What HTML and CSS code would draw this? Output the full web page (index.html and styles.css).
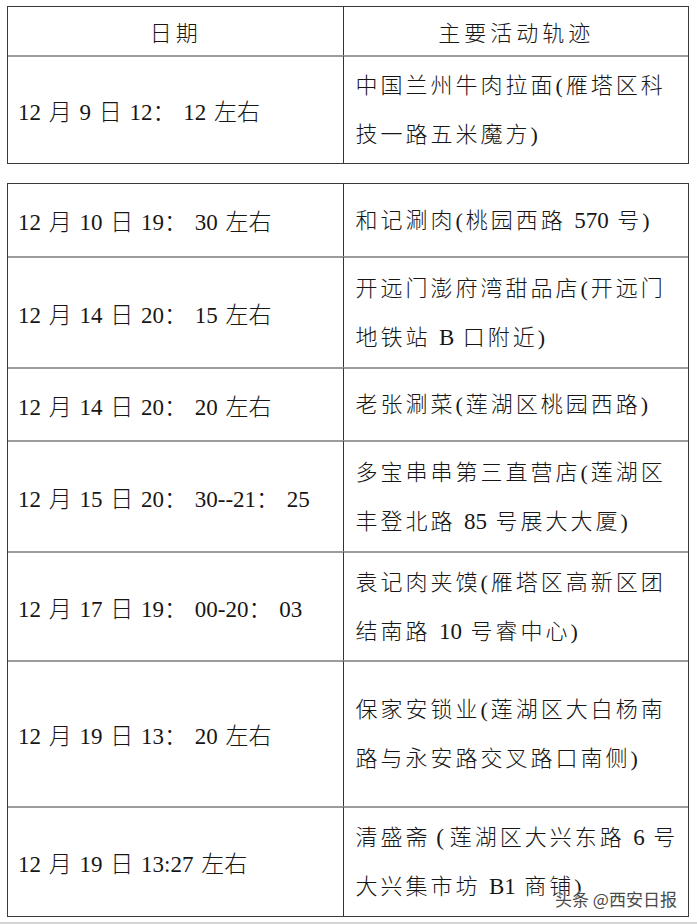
FILE: index.html
```html
<!DOCTYPE html>
<html lang="zh-CN">
<head>
<meta charset="utf-8">
<title>主要活动轨迹</title>
<link rel="stylesheet" href="styles.css">
</head>
<body>
<div class="page">
  <table class="t t1">
    <colgroup><col class="k1"><col class="k2"></colgroup>
    <tr class="r-hd">
      <th class="c1">日期</th>
      <th class="c2">主要活动轨迹</th>
    </tr>
    <tr class="r-108">
      <td class="c1">12 月 9 日 12： 12 左右</td>
      <td class="c2">中国兰州牛肉拉面(雁塔区科<br>技一路五米魔方)</td>
    </tr>
  </table>

  <table class="t t2">
    <colgroup><col class="k1"><col class="k2"></colgroup>
    <tr class="r-first">
      <td class="c1">12 月 10 日 19： 30 左右</td>
      <td class="c2">和记涮肉(桃园西路 <span class="n">570</span> 号)</td>
    </tr>
    <tr class="r-111">
      <td class="c1">12 月 14 日 20： 15 左右</td>
      <td class="c2">开远门澎府湾甜品店(开远门<br>地铁站 <span class="n">B</span> 口附近)</td>
    </tr>
    <tr class="r-73">
      <td class="c1">12 月 14 日 20： 20 左右</td>
      <td class="c2">老张涮菜(莲湖区桃园西路)</td>
    </tr>
    <tr class="r-111">
      <td class="c1">12 月 15 日 20： 30--21： 25</td>
      <td class="c2">多宝串串第三直营店(莲湖区<br>丰登北路 <span class="n">85</span> 号展大大厦)</td>
    </tr>
    <tr class="r-109">
      <td class="c1">12 月 17 日 19： 00-20： 03</td>
      <td class="c2">袁记肉夹馍(雁塔区高新区团<br>结南路 <span class="n">10</span> 号睿中心)</td>
    </tr>
    <tr class="r-146">
      <td class="c1">12 月 19 日 13： 20 左右</td>
      <td class="c2">保家安锁业(莲湖区大白杨南<br>路与永安路交叉路口南侧)</td>
    </tr>
    <tr class="r-110">
      <td class="c1">12 月 19 日 13:27 左右</td>
      <td class="c2">清盛斋<span class="n"> ( </span>莲湖区大兴东路 <span class="n">6</span> 号<br>大兴集市坊 <span class="n">B1</span> 商铺)</td>
    </tr>
  </table>

  <div class="wm">头条 @西安日报</div>
  <div class="edge"></div>
</div>
</body>
</html>
```

FILE: styles.css
```css
html, body {
  margin: 0;
  padding: 0;
  background: #ffffff;
}

.page {
  position: relative;
  width: 697px;
  height: 924px;
  padding: 6px 0 0 7px;
  box-sizing: border-box;
  font-family: "Liberation Serif", "Noto Sans CJK SC", serif;
  color: #161616;
}

.t {
  width: 682px;
  border-collapse: separate;
  border-spacing: 0;
  border: 1.5px solid #3a3a3a;
  table-layout: fixed;
}

.t .k1 { width: 336px; }
.t .k2 { width: 343px; }

.t2 {
  margin-top: 19px;
}

.t th,
.t td {
  padding: 0;
  vertical-align: middle;
  white-space: nowrap;
  font-weight: 300;
  box-sizing: border-box;
}

.t tr + tr th,
.t tr + tr td {
  border-top: 2px solid #9c9c9c;
}

.t .c1 {
  border-right: 1px solid #333333;
}

.t td.c1 {
  font-size: 23px;
  word-spacing: 2px;
  padding-left: 10px;
  text-align: left;
}

.t td.c2 {
  font-size: 22px;
  letter-spacing: 3px;
  line-height: 49px;
  padding-left: 11px;
  text-align: left;
}

.t td.c2 .n {
  letter-spacing: 0;
  font-size: 23px;
}

.t th {
  font-size: 22px;
  letter-spacing: 4px;
  text-align: center;
}

.r-hd th { height: 48px; }
.r-first td { height: 72px; }
.r-73 td { height: 73px; }
.r-108 td { height: 108px; }
.r-109 td { height: 109px; }
.r-110 td { height: 110px; }
.r-111 td { height: 111px; }
.r-146 td { height: 146px; }

.wm {
  position: absolute;
  left: 555px;
  top: 889px;
  font-family: "Noto Sans CJK SC", "Noto Sans", sans-serif;
  font-size: 17px;
  line-height: 20px;
  color: #4a4a4a;
  text-shadow: 0 0 2px #ffffff, 0 0 2px #ffffff;
}

.edge {
  position: absolute;
  left: 0;
  right: 0;
  bottom: 0;
  height: 2px;
  background: #d4d4d4;
}
```
